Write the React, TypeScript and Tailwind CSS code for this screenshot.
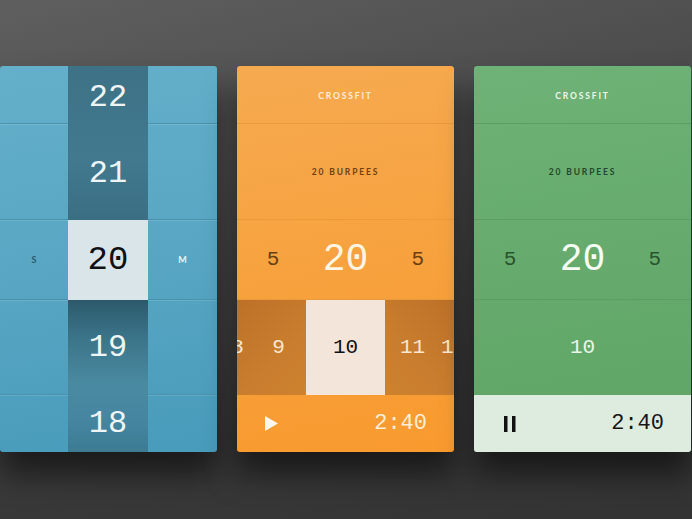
const mono = "font-['Liberation_Mono','DejaVu_Sans_Mono',monospace]";
const label = "font-['Lato','Noto_Sans',sans-serif] text-[8.5px] font-bold tracking-[0.22em]";

function SideColumn({ letter, letterClass }: { letter: string; letterClass: string }) {
  const row = 'border-b border-[#4a93ae] shadow-[0_1px_0_rgba(255,255,255,0.12)]';
  return (
    <div className="flex flex-col">
      <div className={`h-[58px] ${row}`} />
      <div className={`h-[96px] ${row}`} />
      <div className={`flex h-[80px] items-center justify-center ${row}`}>
        <span className={`font-['Lato','Noto_Sans',sans-serif] text-[9px] font-bold ${letterClass}`}>{letter}</span>
      </div>
      <div className={`h-[95px] ${row}`} />
      <div className="h-[57px]" />
    </div>
  );
}

function DayPicker() {
  return (
    <div className="grid w-[217px] grid-cols-[68px_80px_1fr] overflow-hidden rounded-[3px] bg-[linear-gradient(170deg,#64b0cb_0%,#58a6c3_50%,#489bbb_100%)] shadow-[0_22px_30px_rgba(0,0,0,0.55)]">
      <SideColumn letter="S" letterClass="text-[#2a5a6c]" />
      <div className={`flex flex-col text-[#eef5f7] ${mono}`}>
        <div className="flex flex-col bg-[linear-gradient(180deg,#3d7286_0%,#42798e_60%,#3a6f83_100%)]">
          <div className="flex h-[58px] items-center justify-center pt-[5px] text-[32px]">22</div>
          <div className="flex h-[96px] items-center justify-center pt-[3px] text-[32px]">21</div>
        </div>
        <div className="flex h-[80px] items-center justify-center bg-[#dae5ea] text-[34px] text-[#111]">20</div>
        <div className="flex flex-col bg-[linear-gradient(180deg,#2c5a6c_0%,#3b7489_25%,#4a8aa1_55%,#4585a0_80%,#3d7b93_100%)]">
          <div className="flex h-[95px] items-center justify-center text-[32px]">19</div>
          <div className="flex h-[57px] items-center justify-center text-[32px]">18</div>
        </div>
      </div>
      <SideColumn letter="M" letterClass="text-[#e6f3f8]" />
    </div>
  );
}

function PlayIcon() {
  return (
    <svg width="13" height="15" viewBox="0 0 13 15" className="ml-[-2px]">
      <path d="M0 0 L13 7.5 L0 15 Z" fill="#fff7ec" />
    </svg>
  );
}

function PauseIcon() {
  return (
    <svg width="12" height="16" viewBox="0 0 12 16">
      <rect x="0" y="0" width="3.5" height="16" fill="#111" />
      <rect x="8" y="0" width="3.5" height="16" fill="#111" />
    </svg>
  );
}

function WorkoutCard({ tone }: { tone: 'orange' | 'green' }) {
  const orange = tone === 'orange';
  const line = orange ? 'border-b border-[#eb9a3c]' : 'border-b border-[#5d9e65]';
  return (
    <div
      className={`flex w-[217px] flex-col overflow-hidden rounded-[3px] shadow-[0_22px_30px_rgba(0,0,0,0.55)] ${
        orange
          ? 'bg-[linear-gradient(170deg,#f6aa50_0%,#f7a23f_50%,#f89a2e_100%)]'
          : 'bg-[linear-gradient(170deg,#6eb277_0%,#66ab6d_50%,#5ea564_100%)]'
      }`}
    >
      <div className={`flex h-[58px] items-center justify-center pt-[3px] ${line}`}>
        <span className={`${label} ${orange ? 'text-[#fdeed8]' : 'text-[#eef8ec]'}`}>CROSSFIT</span>
      </div>
      <div className={`flex h-[96px] items-center justify-center pt-[1px] ${line}`}>
        <span className={`${label} ${orange ? 'text-[#6e4213]' : 'text-[#25472a]'}`}>20 BURPEES</span>
      </div>
      <div className={`grid h-[80px] grid-cols-3 items-center text-center ${mono} ${line}`}>
        <span className={`text-[21px] ${orange ? 'text-[#6b3f12]' : 'text-[#28552e]'}`}>5</span>
        <span className={`text-[38px] ${orange ? 'text-[#fff5e3]' : 'text-[#f6fcf4]'}`}>20</span>
        <span className={`text-[21px] ${orange ? 'text-[#6b3f12]' : 'text-[#28552e]'}`}>5</span>
      </div>
      {orange ? (
        <div className={`flex h-[95px] text-[21px] ${mono}`}>
          <div className="flex w-[69px] items-center justify-end overflow-hidden bg-[linear-gradient(135deg,#bd7128_0%,#c97d2e_60%,#cd822f_100%)] pr-[7px] text-[#fbe7cf]">
            <span className="w-[41px] shrink-0 text-center">8</span>
            <span className="w-[41px] shrink-0 text-center">9</span>
          </div>
          <div className="flex w-[79px] items-center justify-center bg-[#f3e5da] text-[#111]">10</div>
          <div className="flex flex-1 items-center justify-start overflow-hidden bg-[linear-gradient(225deg,#bd7128_0%,#c97d2e_60%,#cd822f_100%)] pl-[7px] text-[#fbe7cf]">
            <span className="w-[41px] shrink-0 text-center">11</span>
            <span className="w-[41px] shrink-0 text-center">12</span>
          </div>
        </div>
      ) : (
        <div className={`flex h-[95px] items-center justify-center text-[21px] text-[#eaf6e8] ${mono}`}>10</div>
      )}
      <div
        className={`flex h-[57px] items-center justify-between pl-[30px] pr-[27px] ${mono} ${
          orange ? 'text-[#fdeed8]' : 'bg-[#deebdf] text-[#161616]'
        }`}
      >
        {orange ? <PlayIcon /> : <PauseIcon />}
        <span className="text-[22px]">2:40</span>
      </div>
    </div>
  );
}

export default function App() {
  return (
    <div className="h-[519px] w-full overflow-hidden bg-[linear-gradient(165deg,#5f5f5f_0%,#4c4c4c_35%,#393939_70%,#333333_100%)] pt-[66px]">
      <div className="flex items-start justify-start gap-[20px]">
        <DayPicker />
        <WorkoutCard tone="orange" />
        <WorkoutCard tone="green" />
      </div>
    </div>
  );
}
